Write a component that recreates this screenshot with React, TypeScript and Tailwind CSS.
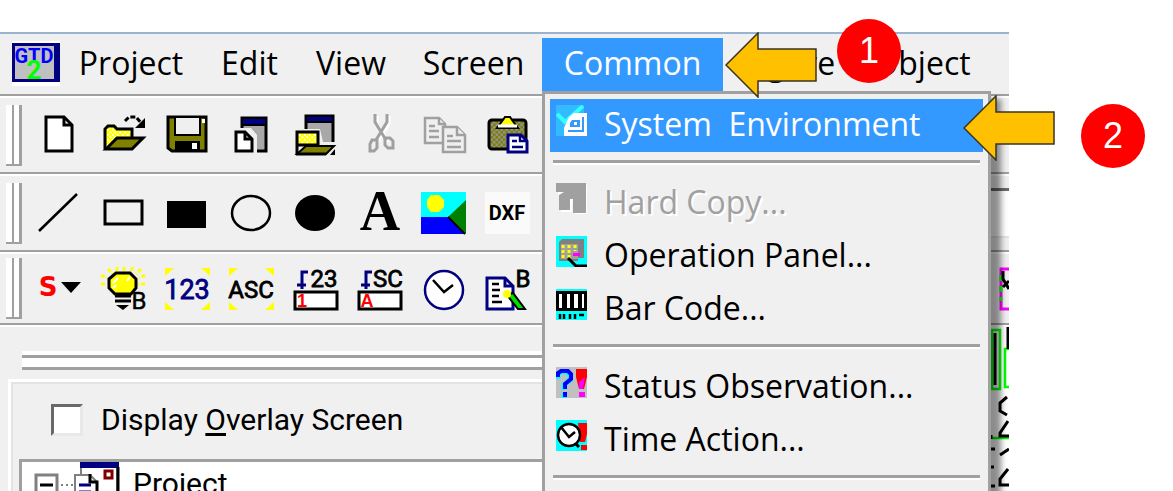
import React from 'react';

const menusLeft = [
  { label: 'Project', width: 'w-[142px]' },
  { label: 'Edit', width: 'w-[95px]' },
  { label: 'View', width: 'w-[108px]' },
  { label: 'Screen', width: 'w-[137px]' },
];
const menusRight = [
  { label: 'Figure', width: 'w-[132px]' },
  { label: 'Object', width: 'w-[134px]' },
];

const menuFont = "font-['Open_Sans','Noto_Sans',sans-serif]";
const labelFont = "font-['Roboto','Liberation_Sans',sans-serif]";

const Icon = ({ children }: { children: React.ReactNode }) => (
  <svg viewBox="0 0 48 48" className="size-12 shrink-0 overflow-visible" aria-hidden="true">
    {children}
  </svg>
);

// 2px checkerboards used by the folder and clipboard icons
const Patterns = () => (
  <svg className="absolute size-0" aria-hidden="true">
    <defs>
      <pattern id="yellowDots" width="5" height="5" patternUnits="userSpaceOnUse">
        <rect width="5" height="5" fill="#ffff00" />
        <circle cx="1.3" cy="1.3" r="1.1" fill="#fff" />
        <circle cx="3.8" cy="3.8" r="1.1" fill="#fff" />
      </pattern>
      <pattern id="oliveDots" width="5" height="5" patternUnits="userSpaceOnUse">
        <rect width="5" height="5" fill="#808000" />
        <rect width="2.5" height="2.5" fill="#909090" />
        <rect x="2.5" y="2.5" width="2.5" height="2.5" fill="#909090" />
      </pattern>
    </defs>
  </svg>
);

const Corners = () => (
  <path d="M2 3h9l-9 8zM47 3h-9l9 8zM2 45h9l-9-8zM47 45h-9l9-8z" fill="#ffff00" />
);

const fileTools = [
  {
    name: 'New',
    icon: (
      <Icon>
        <path d="M11 6H29L37 14V40H11Z" fill="#fff" stroke="#000" strokeWidth="3" />
        <path d="M29 6V14H37" fill="none" stroke="#000" strokeWidth="3" />
      </Icon>
    ),
  },
  {
    name: 'Open',
    icon: (
      <Icon>
        <path d="M6 38V18L9 15H15L18 18H33V26" fill="url(#yellowDots)" stroke="#000" strokeWidth="3" />
        <path d="M7 38L18 27H44L33 38Z" fill="#808000" stroke="#000" strokeWidth="3" />
        <path d="M26 10L30 6H37L43 13" fill="none" stroke="#000" strokeWidth="3" strokeDasharray="5 2" />
        <path d="M46 7V17H36Z" />
      </Icon>
    ),
  },
  {
    name: 'Save',
    icon: (
      <Icon>
        <path d="M5 6H43V40H9L5 37Z" fill="#808000" stroke="#000" strokeWidth="3" />
        <path d="M12 6H37V24H12Z" fill="#efefef" stroke="#000" strokeWidth="2" />
        <path d="M12 30H37V41H12Z" />
        <path d="M29 32H34V38H29ZM39 8H42V12H39Z" fill="#fff" />
      </Icon>
    ),
  },
  {
    name: 'New screen',
    icon: (
      <Icon>
        <path d="M15 7H39V40H15Z" fill="#a8a8a8" stroke="#000" strokeWidth="3" />
        <path d="M16 8H38V13H16Z" fill="#000080" />
        <path d="M16 14H38" stroke="#000" strokeWidth="2" />
        <path d="M5 17H24L30 24V45H5Z" fill="#efefef" />
        <path d="M9 21H18L25 28V40H9Z" fill="#fff" stroke="#000" strokeWidth="3" />
        <path d="M18 21V28H25" fill="none" stroke="#000" strokeWidth="3" />
      </Icon>
    ),
  },
  {
    name: 'Open screen',
    icon: (
      <Icon>
        <path d="M15 5H42V33H15Z" fill="#a8a8a8" stroke="#000" strokeWidth="3" />
        <path d="M16 6H41V10H16Z" fill="#000080" />
        <path d="M16 11H41" stroke="#000" strokeWidth="2" />
        <path d="M4 18H29L32 31H46V34H4Z" fill="#efefef" />
        <path d="M6 43V21H27V34H6" fill="url(#yellowDots)" stroke="#000" strokeWidth="3" />
        <path d="M6 43L15 35H43L35 43Z" fill="#808000" stroke="#000" strokeWidth="2" />
        <path d="M5 43H35" stroke="#000" strokeWidth="3" />
        <path d="M39 44L44 38V44Z" />
      </Icon>
    ),
  },
  {
    name: 'Cut',
    icon: (
      <Icon>
        <g fill="none" stroke="#fff" strokeWidth="3" transform="translate(2 2)">
          <path d="M20 3V11L31 29M32 3V11L21 29" />
        </g>
        <g fill="none" stroke="#a0a0a0" strokeWidth="3">
          <path d="M20 3V11L31 29M32 3V11L21 29" />
          <path d="M17 29H22V37L19 40H15V33ZM30 27H35L38 30V37H33L30 34Z" />
        </g>
      </Icon>
    ),
  },
  {
    name: 'Copy',
    icon: (
      <Icon>
        <g stroke="#a0a0a0" strokeWidth="2.5" fill="#efefef">
          <path d="M6 7H20L26 13V32H6Z" />
          <path d="M10 15H16M10 20H20M10 26H20M20 7V13H26" />
          <path d="M24 16H38L46 24V41H24Z" />
          <path d="M28 25H34M28 30H42M28 36H42M38 16V24H46" />
        </g>
      </Icon>
    ),
  },
  {
    name: 'Paste',
    icon: (
      <Icon>
        <rect x="6" y="9" width="37" height="29" rx="3" fill="url(#oliveDots)" stroke="#000" strokeWidth="3" />
        <path d="M14 17L20 9L22 6H27L29 9L35 17Z" fill="#ffff00" stroke="#000" strokeWidth="2" />
        <path d="M15 15H34" stroke="#fff" strokeWidth="3" />
        <path d="M25 24H38L44 30V41H25Z" fill="#fff" stroke="#000080" strokeWidth="3" />
        <path d="M29 30H34M29 36H40M37 24V30H44" stroke="#000080" strokeWidth="2.5" fill="none" />
      </Icon>
    ),
  },
];

const drawTools = [
  { name: 'Line', icon: <Icon><path d="M4 42L42 5" stroke="#000" strokeWidth="2.5" /></Icon> },
  { name: 'Rectangle', icon: <Icon><rect x="6" y="12" width="37" height="23" fill="none" stroke="#000" strokeWidth="3" /></Icon> },
  { name: 'Filled rectangle', icon: <Icon><rect x="4" y="12" width="39" height="27" /></Icon> },
  { name: 'Circle', icon: <Icon><ellipse cx="24" cy="24" rx="19" ry="17" fill="none" stroke="#000" strokeWidth="2.5" /></Icon> },
  { name: 'Filled circle', icon: <Icon><ellipse cx="24" cy="24" rx="20" ry="18" /></Icon> },
  {
    name: 'Text',
    icon: (
      <Icon>
        <text x="25" y="41" textAnchor="middle" className="font-['Liberation_Serif',serif] text-[56px] font-bold">A</text>
      </Icon>
    ),
  },
  {
    name: 'Picture',
    icon: (
      <Icon>
        <path d="M2 3H47V45H2Z" fill="#00ffff" />
        <path d="M2 28H30L45 45H2Z" fill="#0000ff" />
        <path d="M47 11V45L29 28Z" fill="#008000" />
        <path d="M29 28L46 45" stroke="#000" strokeWidth="2" />
        <path d="M12 6H20L25 11V18L20 23H12L8 18V11Z" fill="#ffff00" />
      </Icon>
    ),
  },
  {
    name: 'DXF',
    icon: (
      <Icon>
        <path d="M2 3H47V45H2Z" fill="#fafafa" />
        <text x="24" y="31" textAnchor="middle" className={`${labelFont} text-[20px] font-bold`}>DXF</text>
      </Icon>
    ),
  },
];

const partTools = [
  {
    name: 'Switch',
    icon: (
      <Icon>
        <text x="13" y="31" textAnchor="middle" fill="#ff0000" className="font-['DejaVu_Sans',sans-serif] text-[26px] font-bold">S</text>
        <path d="M26 17H46L36 28Z" />
      </Icon>
    ),
  },
  {
    name: 'Lamp',
    icon: (
      <Icon>
        <g stroke="#ffff00" strokeWidth="3" strokeDasharray="4 2">
          <path d="M9 4L14 9M18 2V6M25 2V6M33 2V6M42 4L37 9M2 10L8 13M2 19H8M46 10L40 13M46 19H39" />
        </g>
        <path d="M17 8H31L37 14V23L32 29H16L10 23V14Z" fill="#ffff00" stroke="#000" strokeWidth="3" />
        <path d="M14 18L19 13M14 23L17 20M31 12L28 16" stroke="#fff" strokeWidth="2" />
        <path d="M16 31H32M16 36H32" stroke="#000" strokeWidth="3" />
        <path d="M17 40H30L24 45Z" />
        <text x="40" y="44" textAnchor="middle" stroke="#000" strokeWidth="0.5" className={`${labelFont} text-[24px]`}>B</text>
      </Icon>
    ),
  },
  {
    name: 'Numerical display',
    icon: (
      <Icon>
        <Corners />
        <text x="24" y="34" textAnchor="middle" fill="#000080" stroke="#000080" strokeWidth="0.8" className={`${labelFont} text-[27px]`}>123</text>
      </Icon>
    ),
  },
  {
    name: 'ASCII display',
    icon: (
      <Icon>
        <Corners />
        <text x="24" y="33" textAnchor="middle" stroke="#000" strokeWidth="0.8" className={`${labelFont} text-[24px]`}>ASC</text>
      </Icon>
    ),
  },
  {
    name: 'Numerical input',
    icon: (
      <Icon>
        <path d="M4 27H46V44H4Z" fill="#fff" stroke="#000" strokeWidth="3" />
        <path d="M17 7H11V24M6 20H15" fill="none" stroke="#000080" strokeWidth="3" />
        <text x="33" y="22" textAnchor="middle" stroke="#000" strokeWidth="0.8" className={`${labelFont} text-[24px]`}>23</text>
        <text x="11" y="42" textAnchor="middle" fill="#ff0000" className="font-['Liberation_Sans',sans-serif] text-[18px] font-bold">1</text>
      </Icon>
    ),
  },
  {
    name: 'ASCII input',
    icon: (
      <Icon>
        <path d="M4 27H46V44H4Z" fill="#fff" stroke="#000" strokeWidth="3" />
        <path d="M17 7H11V24M6 20H15" fill="none" stroke="#000080" strokeWidth="3" />
        <text x="33" y="22" textAnchor="middle" stroke="#000" strokeWidth="0.8" className={`${labelFont} text-[24px]`}>SC</text>
        <text x="12" y="42" textAnchor="middle" fill="#ff0000" className="font-['Liberation_Sans',sans-serif] text-[18px] font-bold">A</text>
      </Icon>
    ),
  },
  {
    name: 'Clock',
    icon: (
      <Icon>
        <circle cx="25" cy="25" r="19" fill="#fff" stroke="#000080" strokeWidth="2.5" />
        <path d="M14 15L25 27L34 20" fill="none" stroke="#000" strokeWidth="2.5" />
      </Icon>
    ),
  },
  {
    name: 'Comment',
    icon: (
      <Icon>
        <path d="M4 13H22L30 21V44H4Z" fill="#fff" stroke="#000080" strokeWidth="3" />
        <path d="M22 13V21H30" fill="none" stroke="#000080" strokeWidth="3" />
        <path d="M9 19H16M9 25H17M9 31H16M9 37H19" stroke="#000" strokeWidth="2.5" />
        <path d="M24 30L30 28L42 44H35Z" fill="#00e000" stroke="#000" strokeWidth="2" />
        <circle cx="24" cy="29" r="4" fill="#ffff00" />
        <text x="40" y="22" textAnchor="middle" stroke="#000" strokeWidth="0.8" className={`${labelFont} text-[24px]`}>B</text>
      </Icon>
    ),
  },
];

const Toolbar = ({ tools, className, end }: {
  tools: { name: string; icon: React.ReactNode }[];
  className: string;
  end?: React.ReactNode;
}) => (
  <div role="toolbar" className={`flex items-center border-t-2 border-b-2 border-t-white border-b-[#a0a0a0] pl-[6px] ${className}`}>
    <div className="mr-[5px] flex h-[61px] w-4 shrink-0 border-b-2 border-[#a0a0a0]">
      <div className="flex-1 border-r-2 border-[#a0a0a0] bg-white" />
      <div className="flex-1 border-r-[3px] border-[#a0a0a0] bg-white" />
    </div>
    {tools.map((tool) => (
      <button key={tool.name} type="button" aria-label={tool.name} className="flex w-16 shrink-0 justify-center">
        {tool.icon}
      </button>
    ))}
    {end}
  </div>
);

const MenuIcon = ({ children }: { children: React.ReactNode }) => (
  <svg viewBox="0 0 31 31" className="size-[31px] shrink-0" aria-hidden="true">
    {children}
  </svg>
);

const MenuRow = ({ label, icon, active, disabled }: {
  label: string;
  icon: React.ReactNode;
  active?: boolean;
  disabled?: boolean;
}) => {
  const color = active
    ? 'bg-[#3399ff] text-white'
    : disabled
      ? 'text-[#a0a0a0] text-shadow-[2px_2px_0_#fff]'
      : 'text-black';

  return (
    <button
      type="button"
      role="menuitem"
      disabled={disabled}
      className={`flex h-[53px] w-full items-start gap-[17px] pt-[6px] pl-[6px] text-left ${color}`}
    >
      {icon}
      <span className="text-[32px] leading-[38px] whitespace-pre">{label}</span>
    </button>
  );
};

const Separator = () => (
  <div role="separator" className="h-[25px] pt-2 pr-[3px] pl-[3px]">
    <div className="h-[5px] border-t-[3px] border-[#a0a0a0] bg-white" />
  </div>
);

const CommonMenu = () => (
  <div
    role="menu"
    className="absolute top-full left-0 z-10 w-[449px] border-[3px] border-[#a0a0a0] bg-[#f0f0f0] px-[5px] pt-[5px] pb-10 shadow-[10px_8px_6px_rgba(0,0,0,0.45)]"
  >
    <MenuRow
      active
      label="System  Environment"
      icon={
        <MenuIcon>
          <path d="M0 0H28V31H0Z" fill="#33bbff" />
          <path d="M1 9L9 17L27 1" fill="none" stroke="#33ffff" strokeWidth="4" />
          <path d="M13 12L18 8H31V31H8V23Z" fill="#fff" />
          <path d="M27 12V26H12" fill="none" stroke="#3399ff" strokeWidth="2" />
          <path d="M16 15H24V22H14V18Z" fill="#3399ff" />
          <path d="M18 17H21V20H18Z" fill="#fff" />
        </MenuIcon>
      }
    />
    <Separator />
    <MenuRow
      disabled
      label="Hard Copy..."
      icon={
        <MenuIcon>
          <path d="M2 2H31V31H18V18H16V29H5V12H2Z" fill="#fff" />
          <path d="M0 0H30V30H17V16H14V27H3V12L8 9H0Z" fill="#a0a0a0" />
        </MenuIcon>
      }
    />
    <MenuRow
      label="Operation Panel..."
      icon={
        <MenuIcon>
          <path d="M0 0H31V31H0Z" fill="#00ffff" />
          <path d="M6 3H28V22H22V25H3V6Z" fill="#808080" />
          <path d="M5 8H22V23H5Z" fill="#a0a0a0" />
          <path d="M7 9V23M13 9V23M19 9V15" stroke="#ffff00" strokeWidth="3" strokeDasharray="3 2" />
          <path d="M17 17H24V20H17Z" fill="#ff00ff" />
          <path d="M12 22L20 30H31" fill="none" stroke="#000" strokeWidth="3" />
        </MenuIcon>
      }
    />
    <MenuRow
      label="Bar Code..."
      icon={
        <MenuIcon>
          <path d="M0 0H31V31H0Z" fill="#00ffff" />
          <path d="M0 2H31V22H0Z" />
          <path d="M3 5H6V19H3ZM11 5H14V19H11ZM18 5H22V19H18ZM26 5H28V19H26Z" fill="#fff" />
          <path d="M4 25V30M8 25V30M14 25V30M19 25V30M23 26H28" stroke="#000" strokeWidth="2.5" />
        </MenuIcon>
      }
    />
    <Separator />
    <MenuRow
      label="Status Observation..."
      icon={
        <MenuIcon>
          <path d="M0 0H31V31H0Z" fill="#c0c0c0" />
          <path d="M3 11V6L6 4H12L15 7V12L9 17V22M9 25V30" fill="none" stroke="#00ffff" strokeWidth="5" transform="translate(-1 1)" />
          <path d="M2 10V6L5 4H12L15 7V12L9 17V22M9 25V30" fill="none" stroke="#0000ff" strokeWidth="4" />
          <path d="M20 2H31V10L28 22H23L20 10Z" fill="#ff0000" />
          <path d="M29 10L27 22H23V15M23 25H29V30H23Z" fill="#ff00ff" />
        </MenuIcon>
      }
    />
    <MenuRow
      label="Time Action..."
      icon={
        <MenuIcon>
          <path d="M0 0H31V31H0Z" fill="#00ffff" />
          <path d="M22 3H31V14L29 22H24ZM25 25H31V30H25Z" fill="#ff0000" />
          <circle cx="13" cy="15" r="11" fill="#fff" stroke="#000" strokeWidth="2.5" />
          <path d="M5 7L13 17L19 12" fill="none" stroke="#000" strokeWidth="2.5" />
          <path d="M20 24L23 27" stroke="#000" strokeWidth="3" />
        </MenuIcon>
      }
    />
    <Separator />
  </div>
);

const Logo = () => (
  <svg viewBox="0 0 48 45" className="h-[45px] w-12 shrink-0" aria-hidden="true">
    <path d="M0 0H48V45H0Z" fill="#fff" />
    <path d="M0 2H48V41H0Z" fill="#000080" />
    <path d="M3 5H42V38H3Z" fill="#c0c0c0" />
    <text x="22" y="22" textAnchor="middle" fill="#0000ff" className={`${labelFont} text-[20px] font-bold`}>GTD</text>
    <text x="22" y="38" textAnchor="middle" fill="#00ff00" className={`${labelFont} text-[26px] font-bold`}>2</text>
  </svg>
);

const Arrow = ({ className }: { className: string }) => (
  <svg viewBox="0 0 92 66" className={`absolute z-20 h-[66px] w-[92px] ${className}`} aria-hidden="true">
    <path d="M1 33L33 1V17H91V49H33V65Z" fill="#ffc000" stroke="#3a3320" strokeWidth="1.5" />
  </svg>
);

const Step = ({ n, className }: { n: number; className: string }) => (
  <div className={`absolute z-20 flex size-16 items-center justify-center rounded-full bg-[#ff0000] font-['Liberation_Sans',sans-serif] text-[36px] leading-none text-white ${className}`}>
    {n}
  </div>
);

const MenuButton = ({ label, width }: { label: string; width: string }) => (
  <button type="button" className={`h-[53px] shrink-0 pb-1 text-[32px] leading-none ${width}`}>{label}</button>
);

const App: React.FC = () => {
  return (
    <div className="relative h-screen overflow-hidden bg-white pt-8 pr-[164px] text-black">
      <Patterns />
      <div className="flex h-full flex-col overflow-hidden border-t-2 border-[#99b4d1] bg-[#f0f0f0]">
        <nav className={`flex h-[62px] shrink-0 items-start border-b-2 border-[#a0a0a0] pt-1 pl-3 ${menuFont}`}>
          <div className="pt-[3px]"><Logo /></div>
          {menusLeft.map((m) => <MenuButton key={m.label} {...m} />)}
          <div className="relative">
            <button
              type="button"
              aria-haspopup="menu"
              aria-expanded="true"
              className="h-[53px] w-[181px] bg-[#3399ff] pb-1 text-[32px] leading-none text-white"
            >
              Common
            </button>
            <CommonMenu />
          </div>
          {menusRight.map((m) => <MenuButton key={m.label} {...m} />)}
        </nav>

        <Toolbar tools={fileTools} className="h-[78px] shrink-0" />
        <Toolbar
          tools={drawTools}
          className="h-[78px] shrink-0"
          end={<div className="ml-auto h-[50px] w-5 border-t-[3px] border-b-2 border-t-[#696969] border-b-[#e3e3e3] bg-white" />}
        />
        <Toolbar
          tools={partTools}
          className="h-[73px] shrink-0"
          end={
            <svg viewBox="0 0 10 44" className="ml-auto h-11 w-[10px]" aria-hidden="true">
              <path d="M10 2H2V42H10" fill="none" stroke="#ff00ff" strokeWidth="3" />
              <path d="M2 8V34" stroke="#00ff00" strokeWidth="3" strokeDasharray="6 5" />
              <path d="M4 4V12L10 22M10 14L4 20" fill="none" stroke="#000" strokeWidth="3" />
            </svg>
          }
        />

        <div className="flex flex-1 border-t-2 border-white">
          <div className="flex flex-1 flex-col pt-6">
            <div className="ml-[22px] h-[7px] border-t-4 border-b-[3px] border-t-white border-b-[#a0a0a0]" />
            <div className="ml-[22px] h-3 border-b-[3px] border-[#a0a0a0] bg-white" />
            <div className="mt-[9px] ml-2 flex-1 border-t-[3px] border-l-[3px] border-white">
              <div className="h-full border-t-2 border-l-2 border-[#e3e3e3] pl-[6px]">
                <label className={`flex h-[75px] items-center gap-[18px] pb-1 pl-8 text-[30px] leading-none ${labelFont}`}>
                  <input
                    type="checkbox"
                    className="size-8 appearance-none border-[3px] border-t-[#696969] border-r-[#e8e8e8] border-b-[#e8e8e8] border-l-[#696969] bg-white"
                  />
                  <span>Display <span className="underline decoration-[3px] underline-offset-[3px]">O</span>verlay Screen</span>
                </label>
                <div className="h-40 border-t-[3px] border-l-[3px] border-[#a0a0a0] bg-white">
                  <div className={`flex items-start pl-[2px] text-[30px] leading-none ${labelFont}`}>
                    <svg viewBox="0 0 104 48" className="h-12 w-[104px] shrink-0" aria-hidden="true">
                      <path d="M12 13H33V34H12Z" fill="#fff" stroke="#808080" strokeWidth="3" />
                      <path d="M16 23H29" stroke="#000" strokeWidth="3" />
                      <path d="M37 23H51" stroke="#808080" strokeWidth="2" strokeDasharray="2 3" />
                      <path d="M57 2H93V40H57Z" fill="#fff" stroke="#808080" strokeWidth="2" />
                      <path d="M56 0H95V6H56Z" fill="#000080" />
                      <path d="M94 5V40" stroke="#000" strokeWidth="3" />
                      <path d="M81 9H88V16H81Z" fill="#fff" stroke="#800000" strokeWidth="3" />
                      <path d="M51 13H66L73 20V40H51Z" fill="#fff" stroke="#808080" strokeWidth="2" />
                      <path d="M66 12V20H73V40" fill="none" stroke="#000" strokeWidth="3" />
                      <path d="M55 23H67M55 30H67" stroke="#000080" strokeWidth="3" />
                    </svg>
                    <span className="pt-[7px] pl-[5px]">Project</span>
                  </div>
                </div>
              </div>
            </div>
          </div>
          <svg viewBox="0 0 19 164" className="h-[164px] w-[19px] shrink-0 bg-white" aria-hidden="true">
            <path d="M2 3H10V62H2ZM19 22H15V60H19M0 111H19" fill="none" stroke="#00ff00" strokeWidth="2.5" />
            <path d="M5 6V58M18 0V22" stroke="#000" strokeWidth="3" />
            <path d="M17 70L10 76V84L17 88M18 94L10 106V109H19M19 122L10 128M18 142L10 152V158H19" fill="none" stroke="#000" strokeWidth="3" />
            <path d="M1 108V112M1 122H5M1 140H4M0 159H5" stroke="#000" strokeWidth="3" />
          </svg>
        </div>
      </div>

      <Arrow className="top-8 left-[725px]" />
      <Step n={1} className="top-[19px] left-[837px]" />
      <Arrow className="top-[95px] left-[963px]" />
      <Step n={2} className="top-[104px] left-[1081px]" />
    </div>
  );
};

export default App;
